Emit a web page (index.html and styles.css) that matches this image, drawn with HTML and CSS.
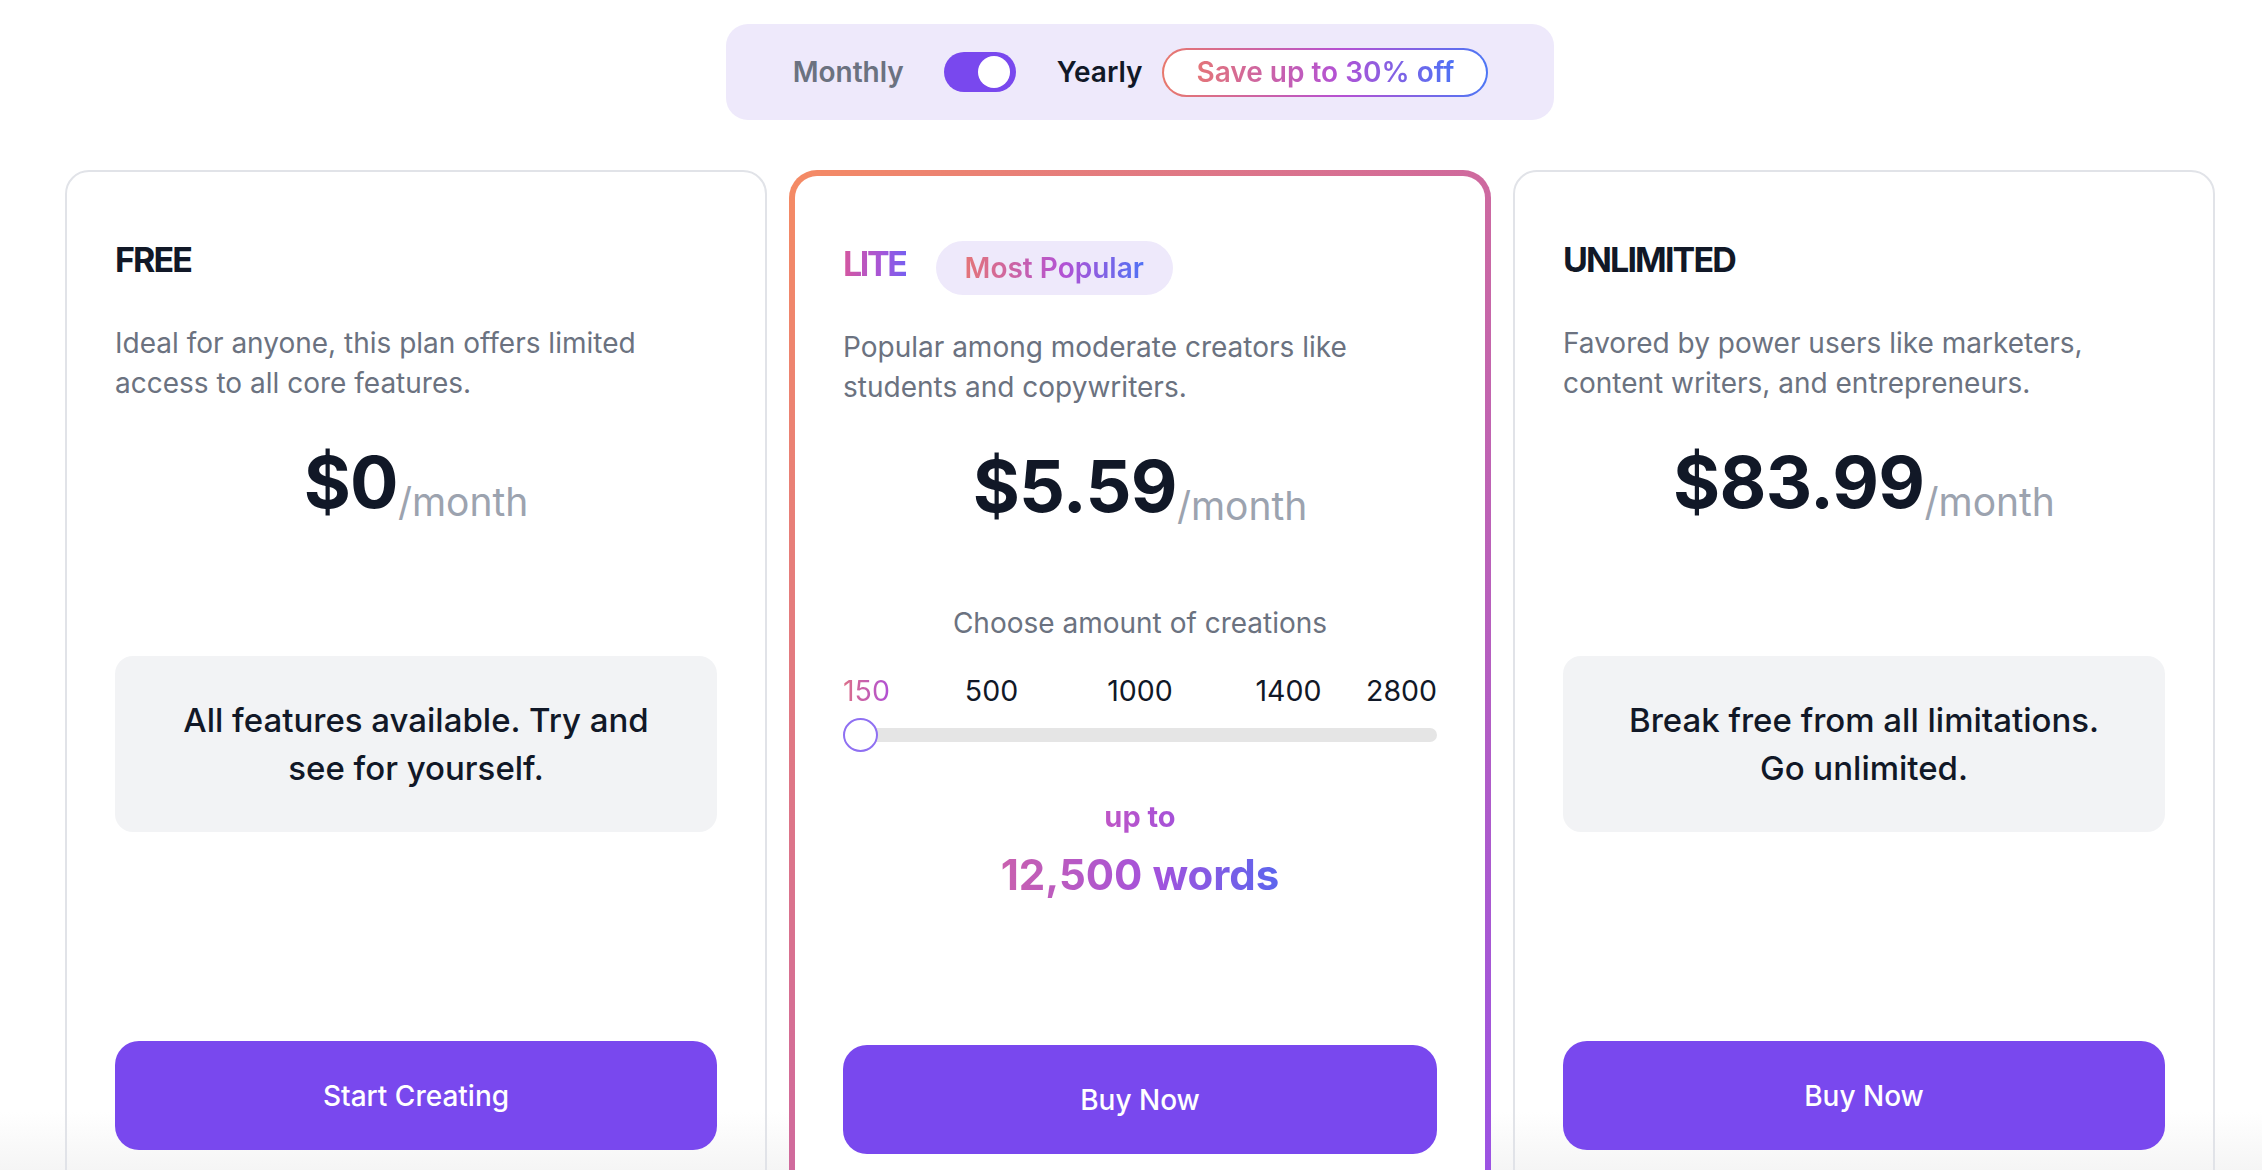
FILE: index.html
```html
<!DOCTYPE html>
<html lang="en">
<head>
<meta charset="utf-8">
<title>Pricing</title>
<link rel="stylesheet" href="styles.css">
</head>
<body>
<div class="page">
  <div class="billing">
    <span class="billing-label muted">Monthly</span>
    <span class="switch"><span class="knob"></span></span>
    <span class="billing-label">Yearly</span>
    <span class="save-pill"><span class="grad-text">Save up to 30% off</span></span>
  </div>

  <div class="plans">
    <section class="plan">
      <header class="plan-head"><h2 class="plan-name">FREE</h2></header>
      <p class="plan-desc">Ideal for anyone, this plan offers limited access to all core features.</p>
      <div class="price"><span class="amount">$0</span><span class="per">/month</span></div>
      <div class="plan-body">
        <div class="feature-box">All features available. Try and see for yourself.</div>
      </div>
      <a class="cta" href="#">Start Creating</a>
    </section>

    <section class="plan popular">
      <header class="plan-head">
        <h2 class="plan-name grad-lite">LITE</h2>
        <span class="badge"><span class="grad-text">Most Popular</span></span>
      </header>
      <p class="plan-desc">Popular among moderate creators like students and copywriters.</p>
      <div class="price"><span class="amount">$5.59</span><span class="per">/month</span></div>
      <div class="plan-body">
        <div class="choose">Choose amount of creations</div>
        <div class="ticks">
          <span class="tick"><span class="tick-text active">150</span></span>
          <span class="tick"><span class="tick-text">500</span></span>
          <span class="tick"><span class="tick-text">1000</span></span>
          <span class="tick"><span class="tick-text">1400</span></span>
          <span class="tick"><span class="tick-text">2800</span></span>
        </div>
        <div class="slider">
          <div class="track"></div>
          <span class="thumb"></span>
        </div>
        <div class="upto">up to</div>
        <div class="words">12,500 words</div>
      </div>
      <a class="cta" href="#">Buy Now</a>
    </section>

    <section class="plan">
      <header class="plan-head"><h2 class="plan-name">UNLIMITED</h2></header>
      <p class="plan-desc">Favored by power users like marketers, content writers, and entrepreneurs.</p>
      <div class="price"><span class="amount">$83.99</span><span class="per">/month</span></div>
      <div class="plan-body">
        <div class="feature-box">Break free from all limitations. Go unlimited.</div>
      </div>
      <a class="cta" href="#">Buy Now</a>
    </section>
  </div>
</div>
</body>
</html>
```

FILE: styles.css
```css
* { box-sizing: border-box; }

html, body {
  margin: 0;
  padding: 0;
}

body {
  font-family: Inter, "Noto Sans", "Liberation Sans", sans-serif;
  color: #111827;
  background: linear-gradient(to bottom, #ffffff 0px, #ffffff 1112px, #f5f5f5 1170px) no-repeat;
  background-color: #f5f5f5;
}

.page {
  width: 2215px;
  padding: 24px 0 0 65px;
}

/* Billing toggle */
.billing {
  width: fit-content;
  margin: 0 auto;
  height: 96px;
  padding: 0 66px 0 67px;
  background: #eee9fb;
  border-radius: 22px;
  display: flex;
  align-items: center;
}

.billing-label {
  font-size: 28px;
  font-weight: 600;
  color: #111827;
  line-height: 1;
}

.billing-label.muted {
  color: #6b7280;
  margin-right: 40px;
}

.switch {
  width: 72px;
  height: 40px;
  border-radius: 20px;
  background: #7948ee;
  display: flex;
  align-items: center;
  justify-content: flex-end;
  padding: 0 6px;
  margin-right: 41px;
}

.knob {
  width: 32px;
  height: 32px;
  border-radius: 50%;
  background: #ffffff;
}

.save-pill {
  margin-left: 20px;
  height: 49px;
  padding: 0 32px;
  border: 2px solid transparent;
  border-radius: 999px;
  background:
    linear-gradient(#ffffff, #ffffff) padding-box,
    linear-gradient(90deg, #e8786c 0%, #b650d2 55%, #4c76f5 100%) border-box;
  display: flex;
  align-items: center;
  font-size: 28px;
  font-weight: 600;
}

.grad-text {
  background: linear-gradient(90deg, #e47578 0%, #b352d4 55%, #4f72f5 100%);
  -webkit-background-clip: text;
  background-clip: text;
  color: transparent;
}

/* Plans */
.plans {
  margin-top: 50px;
  display: grid;
  grid-template-columns: repeat(3, 1fr);
  gap: 22px;
  align-items: start;
}

.plan {
  border: 2px solid #e1e3e8;
  border-radius: 24px;
  padding: 65px 48px 48px;
  display: flex;
  flex-direction: column;
}

.plan.popular {
  border: 6px solid transparent;
  border-radius: 28px;
  background:
    linear-gradient(#ffffff, #ffffff) padding-box,
    linear-gradient(to bottom right, #f58b64 0%, #d36c98 45%, #9a52e6 100%) border-box;
}

.plan-head {
  display: flex;
  align-items: center;
  min-height: 54px;
}

.plan-name {
  margin: 0 0 9px 0;
  font-size: 34px;
  line-height: 40px;
  font-weight: 700;
  letter-spacing: -0.055em;
  color: #111827;
}

.grad-lite {
  letter-spacing: -0.07em;
  background: linear-gradient(90deg, #d5579f 0%, #a655d8 60%, #765ff0 100%);
  -webkit-background-clip: text;
  background-clip: text;
  color: transparent;
}

.badge {
  margin-left: 30px;
  height: 54px;
  padding: 0 29px;
  border-radius: 27px;
  background: #eee9fb;
  display: flex;
  align-items: center;
  font-size: 28px;
  font-weight: 600;
}

.plan-desc {
  margin: 32px 0 0 0;
  max-width: 560px;
  font-size: 28px;
  line-height: 40px;
  color: #6b7280;
}

.price {
  margin-top: 43px;
  display: flex;
  justify-content: center;
  align-items: flex-end;
}

.amount {
  font-size: 72px;
  line-height: 72px;
  font-weight: 700;
  letter-spacing: -0.01em;
  color: #111827;
}

.per {
  font-size: 39px;
  line-height: 39px;
  color: #9ca3af;
  margin-bottom: -2.5px;
}

.plan-body {
  height: 523px;
  display: flex;
  flex-direction: column;
}

.feature-box {
  margin-top: 138px;
  background: #f2f3f5;
  border-radius: 18px;
  padding: 40px 52px;
  text-align: center;
  font-size: 33px;
  line-height: 48px;
  font-weight: 500;
  color: #111827;
}

.choose {
  margin-top: 83px;
  text-align: center;
  font-size: 28px;
  line-height: 36px;
  color: #6b7280;
}

.ticks {
  margin-top: 32px;
  display: flex;
  justify-content: space-between;
  font-size: 28.5px;
  line-height: 36px;
  color: #111827;
}

.tick {
  width: 0;
  display: flex;
  justify-content: center;
  white-space: nowrap;
}

.tick:first-child { justify-content: flex-start; }
.tick:last-child { justify-content: flex-end; }

.tick-text.active {
  background: linear-gradient(90deg, #dc7088 0%, #b04fd6 100%);
  -webkit-background-clip: text;
  background-clip: text;
  color: transparent;
}

.slider {
  margin-top: 9px;
  height: 34px;
  position: relative;
  display: flex;
  align-items: center;
}

.track {
  flex: 1;
  height: 14px;
  border-radius: 7px;
  background: #e5e5e5;
}

.thumb {
  position: absolute;
  left: 0;
  top: 0;
  width: 35px;
  height: 34px;
  border-radius: 50%;
  background: #ffffff;
  border: 2px solid #8f70f2;
}

.upto {
  margin: 47px auto 0;
  width: fit-content;
  font-size: 29px;
  line-height: 36px;
  font-weight: 700;
  background: linear-gradient(90deg, #bf56c6 0%, #a551d9 100%);
  -webkit-background-clip: text;
  background-clip: text;
  color: transparent;
}

.words {
  margin: 15px auto 0;
  width: fit-content;
  font-size: 42px;
  line-height: 50px;
  font-weight: 700;
  background: linear-gradient(90deg, #c960ae 0%, #a452dc 55%, #5c66ee 100%);
  -webkit-background-clip: text;
  background-clip: text;
  color: transparent;
}

.cta {
  height: 109px;
  border-radius: 24px;
  background: #7948ee;
  color: #ffffff;
  text-decoration: none;
  display: flex;
  align-items: center;
  justify-content: center;
  font-size: 28px;
  font-weight: 500;
}
```
